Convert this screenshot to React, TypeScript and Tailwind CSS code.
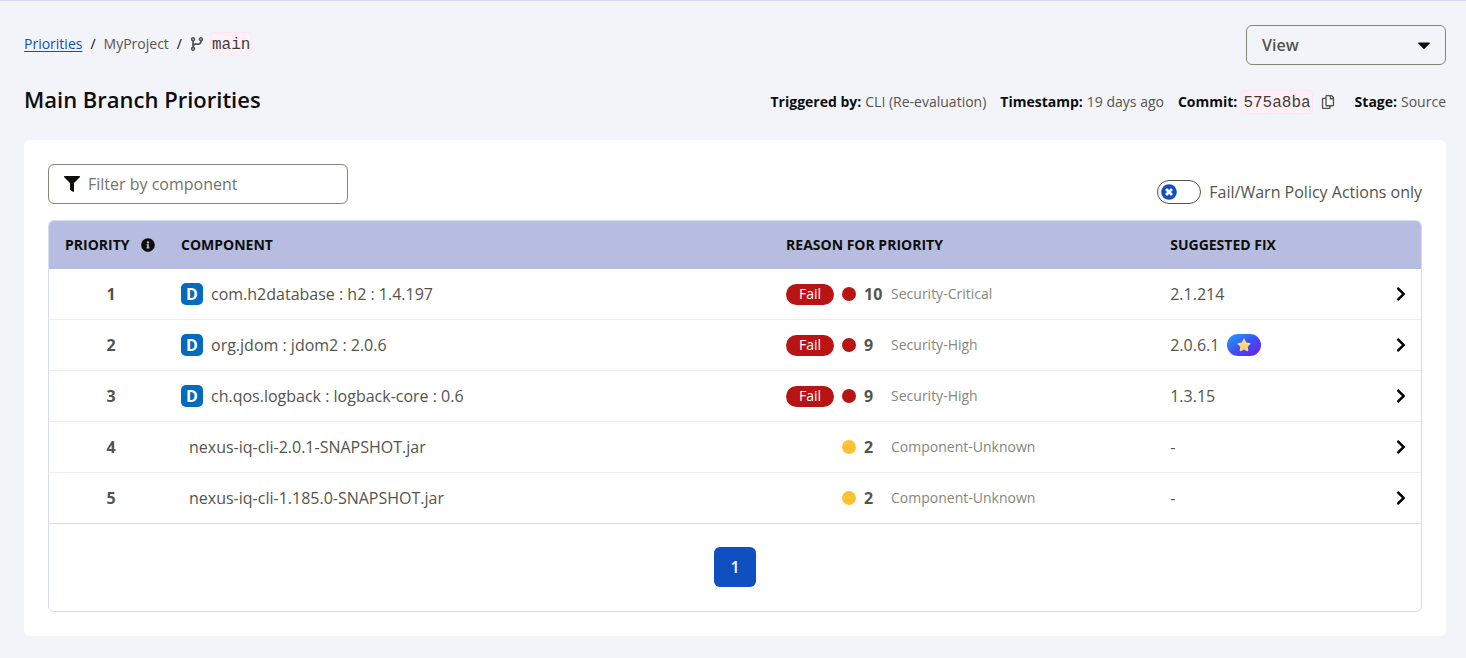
import { useState } from "react";
import { FaCodeBranch } from "react-icons/fa6";
import {
  FaCaretDown,
  FaChevronRight,
  FaFilter,
  FaInfoCircle,
  FaRegCopy,
  FaStar,
} from "react-icons/fa";

type Row = {
  component: string;
  direct: boolean;
  fail: boolean;
  threat: number;
  reason: string;
  fix: string;
  golden?: boolean;
};

const rows: Row[] = [
  { component: "com.h2database : h2 : 1.4.197", direct: true, fail: true, threat: 10, reason: "Security-Critical", fix: "2.1.214" },
  { component: "org.jdom : jdom2 : 2.0.6", direct: true, fail: true, threat: 9, reason: "Security-High", fix: "2.0.6.1", golden: true },
  { component: "ch.qos.logback : logback-core : 0.6", direct: true, fail: true, threat: 9, reason: "Security-High", fix: "1.3.15" },
  { component: "nexus-iq-cli-2.0.1-SNAPSHOT.jar", direct: false, fail: false, threat: 2, reason: "Component-Unknown", fix: "-" },
  { component: "nexus-iq-cli-1.185.0-SNAPSHOT.jar", direct: false, fail: false, threat: 2, reason: "Component-Unknown", fix: "-" },
];

function Code({ children }: { children: string }) {
  return (
    <code className="rounded border border-[#ffe6f1] bg-[#fff0f7] px-px pt-0.5 font-['Liberation_Mono',monospace] text-base leading-5 text-[#3e3e38]">
      {children}
    </code>
  );
}

function ToggleKnob() {
  return (
    <svg viewBox="0 0 16 16" className="size-4" aria-hidden="true">
      <circle cx="8" cy="8" r="7.8" fill="#0f4fbf" />
      <path d="M5 5l6 6M11 5l-6 6" stroke="#fff" strokeWidth="2.8" />
    </svg>
  );
}

function Breadcrumb() {
  return (
    <nav aria-label="Breadcrumb" className="flex h-[38px] items-center gap-2 text-sm">
      <a href="#priorities" className="text-[#0f4fbf] underline underline-offset-2">Priorities</a>
      <span>/</span>
      <span className="text-[#54544c]">MyProject</span>
      <span>/</span>
      <span className="flex items-center gap-1.5 text-[#54544c]">
        <FaCodeBranch className="size-3.5" />
        <Code>main</Code>
      </span>
    </nav>
  );
}

function Detail({ label, value }: { label: string; value: string }) {
  return (
    <div className="flex gap-1">
      <dt className="font-bold">{label}</dt>
      <dd className="text-[#54544c]">{value}</dd>
    </div>
  );
}

export default function App() {
  const [filter, setFilter] = useState("");
  const [failOnly, setFailOnly] = useState(false);
  const shown = rows.filter((r) => r.component.includes(filter) && (!failOnly || r.fail));

  return (
    <div className="min-h-screen border-t border-[#d7dbf0] bg-[#f3f4fa] px-5 pt-6 pb-5 pl-6 font-['Open_Sans',sans-serif] text-[#0d0e0c]">
      <div className="flex items-start justify-between">
        <Breadcrumb />
        <button type="button" className="flex h-10 w-50 items-center justify-between rounded-md border border-[#85877b] px-[15px] text-base font-semibold text-[#54544c]">
          View
          <FaCaretDown className="-mr-1 size-5 text-[#0d0e0c]" />
        </button>
      </div>

      <header className="mt-4 flex items-start justify-between pb-[23px]">
        <h1 className="text-[22px] leading-9 font-semibold">Main Branch Priorities</h1>
        <dl className="flex h-9 items-center gap-3.5 pt-1.5 text-sm">
          <Detail label="Triggered by:" value="CLI (Re-evaluation)" />
          <Detail label="Timestamp:" value="19 days ago" />
          <div className="flex items-center gap-1">
            <dt className="font-bold">Commit:</dt>
            <dd className="flex items-center gap-2">
              <Code>575a8ba</Code>
              <button type="button" aria-label="Copy commit" className="mr-1.5 text-[#54544c]">
                <FaRegCopy className="size-3.5" />
              </button>
            </dd>
          </div>
          <Detail label="Stage:" value="Source" />
        </dl>
      </header>

      <main className="rounded-md bg-white p-6">
        <div className="flex items-start justify-between pb-4">
          <label className="flex h-10 w-75 items-center gap-2 rounded-md border border-[#85877b] px-[15px]">
            <FaFilter className="size-4" />
            <input
              type="text"
              aria-label="Filter by component"
              placeholder="Filter by component"
              value={filter}
              onChange={(e) => setFilter(e.target.value)}
              className="min-w-0 flex-1 bg-transparent text-base outline-none placeholder:text-[#72736a]"
            />
          </label>
          <label className="flex items-center gap-2 pt-4 text-base text-[#54544c]">
            <input
              type="checkbox"
              checked={failOnly}
              onChange={(e) => setFailOnly(e.target.checked)}
              className="peer sr-only"
            />
            <span className="flex h-6 w-11 items-center rounded-full border border-[#54544c] px-[3px] peer-checked:justify-end">
              <ToggleKnob />
            </span>
            Fail/Warn Policy Actions only
          </label>
        </div>

        <div className="overflow-hidden rounded-md border border-[#d7dbf0]">
          <table className="w-full table-fixed border-separate border-spacing-0 text-left">
            <thead>
              <tr className="h-12 bg-[#b6bde1] text-sm">
                <th className="w-[116px] pl-4 font-bold">
                  <span className="flex items-center gap-[11px]">
                    PRIORITY
                    <FaInfoCircle className="size-3.5" />
                  </span>
                </th>
                <th className="w-[44.1%] pl-4 font-bold">COMPONENT</th>
                <th className="w-[28%] pl-4 font-bold">REASON FOR PRIORITY</th>
                <th className="pl-4 font-bold">SUGGESTED FIX</th>
                <th className="w-[52px]" aria-label="Details" />
              </tr>
            </thead>
            <tbody>
              {shown.map((row, i) => (
                <tr key={row.component} className="h-[51px] text-base text-[#54544c] *:border-b *:border-[#ebecf7] last:*:border-[#d7dbf0]">
                  <td className="pl-2 text-center font-bold">{i + 1}</td>
                  <td className="pl-4">
                    <span className="flex items-center gap-2">
                      {row.direct ? (
                        <span className="flex size-[22px] items-center justify-center rounded-[5px] bg-[#006bbf] text-base font-bold text-white">D</span>
                      ) : (
                        <span />
                      )}
                      {row.component}
                    </span>
                  </td>
                  <td className="pl-4">
                    <span className="flex items-center">
                      <span className="w-14">
                        {row.fail && (
                          <span className="flex h-[21px] w-12 items-center justify-center rounded-full bg-[#b91414] text-sm text-white">Fail</span>
                        )}
                      </span>
                      <span className={row.fail ? "size-3.5 rounded-full bg-[#b91414]" : "size-3.5 rounded-full bg-[#ffc132]"} />
                      <span className="ml-2 w-[27px] font-bold">{row.threat}</span>
                      <span className="text-sm text-[#85877b]">{row.reason}</span>
                    </span>
                  </td>
                  <td className="pl-4">
                    <span className="flex items-center gap-2">
                      {row.fix}
                      {row.golden && (
                        <span className="flex h-[22px] w-[34px] items-center justify-center rounded-full bg-linear-to-br from-[#0aa5ff] via-[#3a4ff5] to-[#6a00ea]">
                          <FaStar className="size-3.5 text-[#ffd57a]" />
                        </span>
                      )}
                    </span>
                  </td>
                  <td>
                    <button type="button" aria-label={"Open " + row.component} className="flex w-full justify-end pr-3 text-black">
                      <FaChevronRight className="size-4" />
                    </button>
                  </td>
                </tr>
              ))}
            </tbody>
          </table>
          <div className="flex justify-center pt-[23px] pb-6">
            <button type="button" aria-current="page" className="h-10 w-[42px] rounded-md bg-[#0f4fbf] text-base font-semibold text-white">1</button>
          </div>
        </div>
      </main>
    </div>
  );
}
